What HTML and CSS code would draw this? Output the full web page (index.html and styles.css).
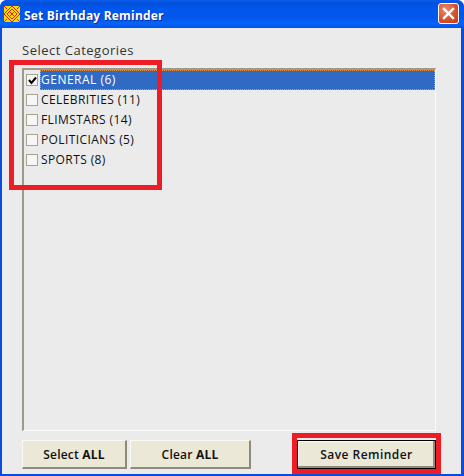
FILE: index.html
```html
<!DOCTYPE html>
<html lang="en">
<head>
<meta charset="utf-8">
<title>Set Birthday Reminder</title>
<link rel="stylesheet" href="styles.css">
</head>
<body>
<div class="window">
  <header class="titlebar">
    <svg class="app-icon" width="16" height="16" viewBox="0 0 16 16" shape-rendering="crispEdges">
      <rect width="16" height="16" fill="#f6d800"/>
      <g fill="none" stroke="#e0261c" stroke-width="1.1">
        <path d="M8 0 16 8 8 16 0 8Z"/>
        <path d="M8 3 3 8 6 11M8 3 13 8 10 11M3 8 8 13 13 8"/>
        <path d="M5.5 5.5 10.5 10.5M10.5 5.5 5.5 10.5"/>
        <path d="M0 0 3 3M16 0 13 3M0 16 3 13M16 16 13 13"/>
      </g>
    </svg>
    <span class="title">Set Birthday Reminder</span>
    <button class="close" aria-label="Close">
      <svg width="13" height="13" viewBox="0 0 13 13"><path d="M2 2 11 11M11 2 2 11" stroke="#fff" stroke-width="2.4" stroke-linecap="square" fill="none"/></svg>
    </button>
  </header>
  <main class="client">
    <div class="group-label">Select Categories</div>
    <div class="listbox">
      <div class="row"><span class="check"><svg width="9" height="9" viewBox="0 0 9 9"><path d="M1 4 3.5 7 8 1.5" stroke="#000" stroke-width="2" fill="none"/></svg></span><span class="item selected">GENERAL (6)</span></div>
      <div class="row"><span class="check"></span><span class="item">CELEBRITIES (11)</span></div>
      <div class="row"><span class="check"></span><span class="item">FLIMSTARS (14)</span></div>
      <div class="row"><span class="check"></span><span class="item">POLITICIANS (5)</span></div>
      <div class="row"><span class="check"></span><span class="item">SPORTS (8)</span></div>
    </div>
    <div class="actions">
      <button class="btn btn-select">Select <b>ALL</b></button>
      <button class="btn btn-clear">Clear <b>ALL</b></button>
      <button class="btn btn-save">Save Reminder</button>
    </div>
  </main>
  <div class="mark mark-list"></div>
  <div class="mark mark-save"></div>
</div>
</body>
</html>
```
FILE: styles.css
```css
* { box-sizing: border-box; }
html, body { margin: 0; padding: 0; background: #fff; }
body { width: 464px; height: 476px; overflow: hidden; font-family: "Open Sans", "Noto Sans", sans-serif; }
.window {
  position: relative;
  width: 464px;
  height: 476px;
  display: flex;
  flex-direction: column;
  background: #0a4be0;
  border-radius: 7px 7px 0 0;
  overflow: hidden;
}
.titlebar {
  height: 28px;
  flex: none;
  display: flex;
  align-items: center;
  padding: 0 5px 0 4px;
  background: linear-gradient(180deg, #0a5ce8 0%, #0350dc 12%, #0058ee 35%, #0355e8 60%, #0564fb 85%, #0252e4 100%);
}
.app-icon { flex: none; margin-right: 4px; }
.title {
  flex: 1;
  color: #fff;
  font-family: "Open Sans", sans-serif;
  font-size: 12px;
  font-weight: 700;
  letter-spacing: 0.2px;
  padding-top: 3px;
  text-shadow: 1px 1px 0 #0a2f9c;
}
.close {
  width: 21px;
  height: 21px;
  padding: 0;
  margin-top: -1px;
  display: flex;
  align-items: center;
  justify-content: center;
  background: radial-gradient(circle at 35% 30%, #e98a6c, #d9512b 55%, #c23c10);
  border: 1px solid #fff;
  border-radius: 3px;
}
.client {
  flex: 1;
  margin: 0 3px 2px 2px;
  background: #ebebeb;
  display: flex;
  flex-direction: column;
  padding: 14px 25px 5px 20px;
}
.group-label {
  height: 26px;
  font-size: 13px;
  line-height: 16px;
  letter-spacing: 0.5px;
  color: #333;
}
.listbox {
  height: 363px;
  border-style: solid;
  border-width: 2px 1px 1px 2px;
  border-color: #9d9a8a #fbfbf5 #fbfbf5 #9d9a8a;
}
.row { height: 20px; display: flex; align-items: center; padding-left: 2px; }
.check {
  width: 12px;
  height: 12px;
  flex: none;
  display: flex;
  align-items: center;
  justify-content: center;
  margin-right: 2px;
  background: #f6f6f6;
  border: 1px solid #a8a48f;
}
.item {
  flex: none;
  height: 20px;
  padding-left: 1px;
  font-size: 12px;
  line-height: 19px;
  letter-spacing: 0.4px;
  color: #111;
}
.item.selected {
  flex: 1;
  background: #316ac5;
  color: #fff;
  font-weight: 500;
  letter-spacing: 0.5px;
  outline: 1px dotted #e8964a;
  outline-offset: -1px;
}
.actions {
  display: flex;
  margin-top: 9px;
  gap: 3px;
}
.btn {
  height: 29px;
  padding: 0;
  font-family: "Open Sans", "Noto Sans", sans-serif;
  font-size: 12px;
  font-weight: 600;
  letter-spacing: 0.2px;
  color: #111;
  background: #ebe8d8;
  border-style: solid;
  border-width: 1px 2px 2px 1px;
  border-color: #fbfbf5 #8e8b7c #8e8b7c #fbfbf5;
}
.btn b { font-weight: 700; }
.btn-select { width: 105px; }
.btn-clear { width: 121px; }
.btn-save {
  width: 139px;
  margin-left: 43px;
  border: 1px solid #000;
  box-shadow: inset -2px -2px 0 #8e8b7c, inset 1px 1px 0 #fbfbf5;
  letter-spacing: 0.45px;
}
.mark { position: absolute; border: 5px solid #ee1c25; pointer-events: none; }
.mark-list { left: 9px; top: 60px; width: 153px; height: 130px; }
.mark-save { left: 292px; top: 433px; width: 149px; height: 41px; }
```
